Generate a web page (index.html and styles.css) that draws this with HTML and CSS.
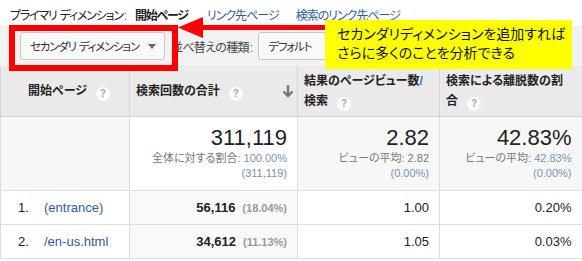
FILE: index.html
```html
<!DOCTYPE html>
<html lang="ja">
<head>
<meta charset="utf-8">
<link rel="stylesheet" href="styles.css">
</head>
<body>
<div class="page">
  <div class="dims">
    <span class="dims-label">プライマリ ディメンション<span class="colon">:</span></span>
    <span class="dims-current">開始ページ</span>
    <a class="dims-link first">リンク先ページ</a>
    <a class="dims-link">検索のリンク先ページ</a>
  </div>
  <div class="toolbar">
    <div class="btn btn-secondary"><span>セカンダリ ディメンション</span><span class="caret"></span></div>
    <span class="sort-label">並べ替えの種類<span class="colon">:</span></span>
    <div class="btn btn-sort"><span>デフォルト</span><span class="caret"></span></div>
  </div>
  <table class="grid">
    <colgroup>
      <col class="c1"><col class="c2"><col class="c3"><col class="c4">
    </colgroup>
    <thead>
      <tr>
        <th class="h1"><span class="hwrap">開始ページ<span class="help">?</span></span></th>
        <th class="h2"><span class="hflex"><span class="hwrap">検索回数の合計<span class="help">?</span></span>
          <svg class="sort-arrow" width="12" height="14" viewBox="0 0 12 14"><path d="M6 1 V12 M1.5 7.5 L6 12 L10.5 7.5" fill="none" stroke="#777" stroke-width="2.4"/></svg></span></th>
        <th class="h3">結果のページビュー数<span class="slash">/</span><br>検索<span class="help">?</span></th>
        <th class="h4">検索による離脱数の割<br>合<span class="help">?</span></th>
      </tr>
    </thead>
    <tbody>
      <tr class="summary">
        <td class="s1"></td>
        <td class="s2 num"><div class="big">311,119</div><div class="sub">全体に対する割合: <span class="bv">100.00%</span></div><div class="sub bv">(311,119)</div></td>
        <td class="s3 num"><div class="big">2.82</div><div class="sub">ビューの平均: 2.82</div><div class="sub bv">(0.00%)</div></td>
        <td class="s4 num"><div class="big">42.83%</div><div class="sub">ビューの平均: <span class="bv">42.83%</span></div><div class="sub bv">(0.00%)</div></td>
      </tr>
      <tr class="row">
        <td class="d1"><span class="idx">1.</span><a class="page-link">(entrance)</a></td>
        <td class="d2 num"><b>56,116</b><span class="pct">(18.04%)</span></td>
        <td class="num">1.00</td>
        <td class="num">0.20%</td>
      </tr>
      <tr class="row">
        <td class="d1"><span class="idx">2.</span><a class="page-link">/en-us.html</a></td>
        <td class="d2 num"><b>34,612</b><span class="pct">(11.13%)</span></td>
        <td class="num">1.05</td>
        <td class="num">0.03%</td>
      </tr>
    </tbody>
  </table>

  <div class="annot-box"></div>
  <svg class="annot-arrow" width="150" height="26" viewBox="0 0 150 26"><polygon points="2,12.5 27,2 27,23" fill="#ff0000"/><rect x="26" y="10" width="124" height="5" fill="#ff0000"/></svg>
  <div class="callout">セカンダリディメンションを追加すれば<br>さらに多くのことを分析できる</div>
</div>
</body>
</html>
```

FILE: styles.css
```css
* { box-sizing: border-box; }
html, body { margin: 0; padding: 0; background: #fff; }
body {
  font-family: "Liberation Sans", "Noto Sans CJK JP", sans-serif;
  font-size: 12px;
  color: #222;
  font-feature-settings: "palt";
}
.page { position: relative; width: 582px; height: 261px; overflow: hidden; }

.dims {
  height: 26px;
  display: flex;
  align-items: center;
  padding-left: 10px;
  padding-top: 2px;
  font-size: 12px;
  letter-spacing: -1.2px;
  word-spacing: 1px;
  white-space: nowrap;
}
.colon { color: #3a6fc4; margin-left: 1px; }
.dims-current { font-weight: bold; margin-left: 9px; position: relative; color: #222; letter-spacing: -1.2px; }
.dims-current::after {
  content: "";
  position: absolute;
  left: 26px;
  top: 19px;
  border-left: 4px solid transparent;
  border-right: 4px solid transparent;
  border-bottom: 4px solid #d5d5d5;
}
.dims-link { color: #2a5db0; margin-left: 17px; letter-spacing: -1px; }
.dims-link.first { margin-left: 19px; }

.toolbar {
  height: 40px;
  background: #f2f2f2;
  display: flex;
  align-items: center;
  padding-left: 20px;
  white-space: nowrap;
}
.btn {
  height: 28px;
  border: 1px solid #c8c8c8;
  border-radius: 3px;
  background: #f9f9f9;
  display: flex;
  align-items: center;
  justify-content: space-between;
  padding: 0 8px 0 9px;
  color: #333;
  font-size: 11.5px;
  letter-spacing: -1.2px;
  word-spacing: 1px;
  flex: none;
}
.btn-secondary { width: 145px; }
.btn-sort { width: 100px; margin-left: 6px; }
.caret {
  width: 0; height: 0;
  border-left: 4px solid transparent;
  border-right: 4px solid transparent;
  border-top: 5px solid #666;
}
.sort-label { margin-left: 6px; color: #444; letter-spacing: -0.7px; }

.grid {
  width: 582px;
  border-collapse: collapse;
  table-layout: fixed;
}
.c1 { width: 129px; }
.c2 { width: 168px; }
.c3 { width: 142px; }
.c4 { width: 143px; }

.grid th {
  height: 50px;
  background: #eaeaea;
  border-left: 1px solid #d6d6d6;
  border-bottom: 1px solid #d2d2d2;
  text-align: left;
  vertical-align: middle;
  font-weight: bold;
  font-size: 12px;
  line-height: 20px;
  padding: 0 6px;
  color: #222;
}
.grid th.h1 { padding-left: 27px; }
.grid th.h2 { padding-right: 3px; }
.hflex { display: flex; align-items: center; justify-content: space-between; }
.slash { color: #3a6fc4; }
.help {
  display: inline-block;
  width: 14px;
  height: 14px;
  border-radius: 50%;
  background: #fdfdfd;
  color: #aaa;
  font-size: 10px;
  line-height: 14px;
  text-align: center;
  font-weight: bold;
  margin-left: 9px;
  vertical-align: -2px;
  font-family: "Liberation Sans", sans-serif;
}
.sort-arrow { display: block; }

.grid td {
  border-left: 1px solid #dcdcdc;
  border-bottom: 1px solid #dedede;
  padding: 0 10px;
}
.grid td.num { text-align: right; }
.summary td {
  background: #f7f7f7;
  padding-top: 8px;
  padding-bottom: 9px;
  vertical-align: top;
}
.summary td.s2 { background: #fff; }
.big { font-size: 22px; line-height: 26px; color: #222; }
.sub { font-size: 11px; line-height: 15px; color: #777; }
.bv { color: #7893b6; }
.summary td.s4 { padding-right: 11px; }

.row td {
  height: 34px;
  font-size: 13px;
  color: #222;
  vertical-align: middle;
}
.row td.d1 { padding-left: 17px; }
.row td.d2 { background: #f9f9f9; }
.row td:last-child { padding-right: 11px; }
.idx { display: inline-block; width: 26px; }
.page-link { color: #2a5db0; }
.pct { color: #999; font-size: 11px; font-weight: bold; margin-left: 7px; }

.annot-box {
  position: absolute;
  left: 9px;
  top: 25px;
  width: 169px;
  height: 46px;
  border: 6px solid #ff0000;
}
.annot-arrow { position: absolute; left: 176px; top: 15px; }
.callout {
  position: absolute;
  left: 325px;
  top: 20px;
  width: 247px;
  height: 49px;
  background: #ffff00;
  color: #111;
  font-size: 14px;
  line-height: 19px;
  padding: 5px 0 0 12px;
  white-space: nowrap;
}
```
